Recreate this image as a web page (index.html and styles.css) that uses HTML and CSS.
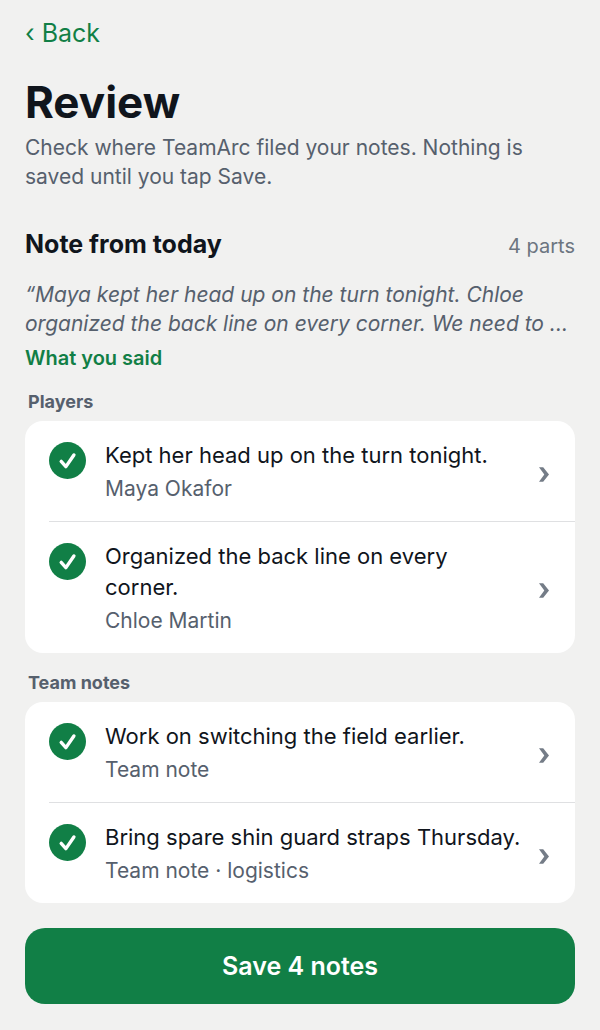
FILE: index.html
```html
<!DOCTYPE html>
<html lang="en">
<head>
    <meta charset="UTF-8">
    <meta name="viewport" content="width=device-width, initial-scale=1.0">
    <title>TeamArc - Review</title>
    <link rel="stylesheet" href="styles.css">
</head>
<body>
    <div class="container">
        <a class="back" href="#">‹ Back</a>
        <h1>Review</h1>
        <p class="intro">Check where TeamArc filed your notes. Nothing is saved until you tap Save.</p>

        <div class="note-header">
            <h2>Note from today</h2>
            <span class="parts">4 parts</span>
        </div>
        <p class="quote">“Maya kept her head up on the turn tonight. Chloe organized the back line on every corner. We need to ...</p>
        <button class="said" type="button">What you said</button>

        <!-- Players -->
        <h3>Players</h3>
        <ul class="card">
            <li>
                <button class="item" type="button">
                    <svg class="check" viewBox="0 0 37 37" aria-hidden="true"><circle cx="18.5" cy="18.5" r="18.5"/><path d="M12.200 19.400l4.700 5.200 8-11.600"/></svg>
                    <span class="item-text">
                        <span class="item-title">Kept her head up on the turn tonight.</span>
                        <span class="item-sub">Maya Okafor</span>
                    </span>
                    <svg class="chevron" viewBox="0 0 10 22" aria-hidden="true"><path d="M0 6.200h4.200L10 13.500l-5.800 7.300H0L5.300 13.500z"/></svg>
                </button>
            </li>
            <li>
                <button class="item" type="button">
                    <svg class="check" viewBox="0 0 37 37" aria-hidden="true"><circle cx="18.5" cy="18.5" r="18.5"/><path d="M12.200 19.400l4.700 5.200 8-11.600"/></svg>
                    <span class="item-text">
                        <span class="item-title">Organized the back line on every corner.</span>
                        <span class="item-sub">Chloe Martin</span>
                    </span>
                    <svg class="chevron" viewBox="0 0 10 22" aria-hidden="true"><path d="M0 6.200h4.200L10 13.500l-5.800 7.300H0L5.300 13.500z"/></svg>
                </button>
            </li>
        </ul>

        <!-- Team notes -->
        <h3>Team notes</h3>
        <ul class="card">
            <li>
                <button class="item" type="button">
                    <svg class="check" viewBox="0 0 37 37" aria-hidden="true"><circle cx="18.5" cy="18.5" r="18.5"/><path d="M12.200 19.400l4.700 5.200 8-11.600"/></svg>
                    <span class="item-text">
                        <span class="item-title">Work on switching the field earlier.</span>
                        <span class="item-sub">Team note</span>
                    </span>
                    <svg class="chevron" viewBox="0 0 10 22" aria-hidden="true"><path d="M0 6.200h4.200L10 13.500l-5.800 7.300H0L5.300 13.500z"/></svg>
                </button>
            </li>
            <li>
                <button class="item" type="button">
                    <svg class="check" viewBox="0 0 37 37" aria-hidden="true"><circle cx="18.5" cy="18.5" r="18.5"/><path d="M12.200 19.400l4.700 5.200 8-11.600"/></svg>
                    <span class="item-text">
                        <span class="item-title">Bring spare shin guard straps Thursday.</span>
                        <span class="item-sub">Team note · logistics</span>
                    </span>
                    <svg class="chevron" viewBox="0 0 10 22" aria-hidden="true"><path d="M0 6.200h4.200L10 13.500l-5.800 7.300H0L5.300 13.500z"/></svg>
                </button>
            </li>
        </ul>

        <button class="save" type="button">Save 4 notes</button>
    </div>
</body>
</html>
```
FILE: styles.css
```css
/* General styles */
* {
    box-sizing: border-box;
}
body {
    font-family: Inter, sans-serif;
    margin: 0;
    background-color: #f1f1f0;
    color: #10151c;
}
h1, h2, h3, p, ul {
    margin: 0;
    padding: 0;
}
button {
    font-family: inherit;
    border: none;
    padding: 0;
    cursor: pointer;
}
.container {
    padding: 16px 25px 24px;
}
.back {
    display: block;
    color: #117f46;
    font-size: 25px;
    line-height: 34px;
    text-decoration: none;
}
h1 {
    font-size: 44px;
    line-height: 56px;
    font-weight: 700;
    margin-top: 24px;
}
.intro {
    color: #56606d;
    font-size: 21px;
    line-height: 29px;
    margin-top: 3px;
}
/* Note summary */
.note-header {
    display: flex;
    justify-content: space-between;
    align-items: baseline;
    margin-top: 36px;
}
h2 {
    font-size: 25px;
    line-height: 34px;
    font-weight: 700;
}
.parts {
    color: #6c7580;
    font-size: 20px;
}
.quote {
    color: #56606d;
    font-size: 21px;
    line-height: 29px;
    font-style: italic;
    margin-top: 19px;
}
.said {
    display: block;
    background: none;
    color: #117f46;
    font-size: 20px;
    line-height: 28px;
    font-weight: 600;
    margin-top: 6px;
}
/* Cards */
h3 {
    color: #56606d;
    font-size: 18px;
    line-height: 24px;
    font-weight: 700;
    margin: 18px 3px 7px;
}
.card {
    list-style: none;
    background-color: white;
    border-radius: 18px;
    padding-left: 24px;
}
.card li + li {
    border-top: 1px solid #dfe0e2;
}
.item {
    display: flex;
    align-items: center;
    width: 100%;
    background: none;
    padding: 19px 26px 18px 0;
    text-align: left;
}
.check {
    flex: none;
    align-self: flex-start;
    width: 37px;
    height: 37px;
    margin: 2px 19px 0 0;
    fill: #117f46;
}
.check path {
    fill: none;
    stroke: white;
    stroke-width: 3.4;
    stroke-linecap: round;
    stroke-linejoin: round;
}
.item-text {
    flex: 1;
}
.item-title, .item-sub {
    display: block;
}
.item-title {
    color: #10151c;
    font-size: 22px;
    line-height: 31px;
}
.item-sub {
    color: #56606d;
    font-size: 21px;
    line-height: 28px;
    margin-top: 4px;
}
.chevron {
    flex: none;
    width: 10px;
    height: 22px;
    margin-left: 16px;
    fill: #747c87;
}
.save {
    width: 100%;
    background-color: #117f46;
    color: white;
    border-radius: 20px;
    font-size: 25px;
    line-height: 34px;
    font-weight: 600;
    padding: 21px;
    margin-top: 25px;
}
```
